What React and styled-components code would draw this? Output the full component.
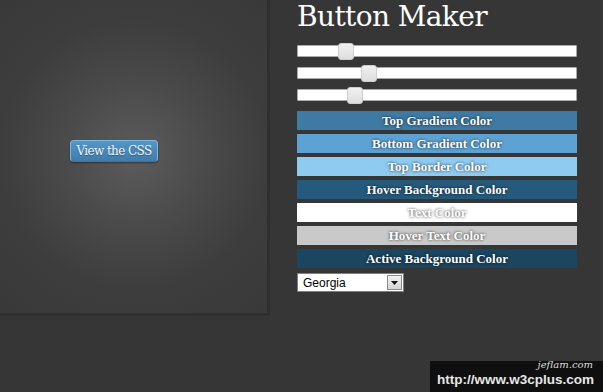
import React from "react";
import styled, { createGlobalStyle } from "styled-components";

const GlobalStyle = createGlobalStyle`
  html, body {
    margin: 0;
    padding: 0;
    background: #363636;
    height: 100%;
  }
  #root {
    height: 100%;
  }
`;

const colorRows = [
  { label: "Top Gradient Color", bg: "#3f7aa4", fg: "#ffffff" },
  { label: "Bottom Gradient Color", bg: "#5ea2d3", fg: "#ffffff" },
  { label: "Top Border Color", bg: "#8fcaf1", fg: "#ffffff" },
  { label: "Hover Background Color", bg: "#265a7c", fg: "#ffffff" },
  { label: "Text Color", bg: "#ffffff", fg: "#ffffff" },
  { label: "Hover Text Color", bg: "#c9c9c9", fg: "#ffffff" },
  { label: "Active Background Color", bg: "#1b4561", fg: "#ffffff" },
];

// thumb offsets along each track, in px
const sliders = [40, 63, 49];

const Page = styled.div`
  position: relative;
  display: flex;
  align-items: flex-start;
  gap: 27px;
  width: 603px;
  height: 392px;
  overflow: hidden;
  font-family: "DejaVu Serif", "Liberation Serif", serif;
`;

const Preview = styled.div`
  width: 267px;
  height: 313px;
  flex-shrink: 0;
  display: flex;
  align-items: center;
  justify-content: center;
  background: radial-gradient(
    circle at 135px 155px,
    #5c5c5c 0%,
    #4a4a4a 35%,
    #3d3d3d 65%,
    #393939 100%
  );
  border-right: 3px solid #2f2f2f;
  border-bottom: 3px solid #303030;
  box-sizing: content-box;
`;

const CssButton = styled.button`
  margin: 0 39px 12px 0;
  height: 22px;
  padding: 0 5px;
  border: 1px solid #7fb9e2;
  border-bottom-color: #3c75a2;
  border-radius: 4px;
  background: linear-gradient(#5595c8, #3f7cab);
  color: #f4f8fb;
  font-family: "DejaVu Serif", serif;
  font-size: 12px;
  letter-spacing: -0.6px;
  text-shadow: 0 1px 1px rgba(0, 0, 0, 0.35);
  box-shadow: 0 1px 2px rgba(0, 0, 0, 0.4);
`;

const Controls = styled.div`
  width: 280px;
  display: flex;
  flex-direction: column;
`;

const Title = styled.h1`
  margin: 0 0 9px;
  color: #ffffff;
  font-family: "DejaVu Serif", serif;
  font-weight: normal;
  font-size: 28px;
  letter-spacing: -0.6px;
  line-height: 33px;
  height: 33px;
`;

const SliderList = styled.div`
  display: flex;
  flex-direction: column;
  gap: 10px;
  margin-top: 3px;
  margin-bottom: 10px;
`;

const Track = styled.div`
  position: relative;
  height: 10px;
  background: #ffffff;
  border: 1px solid #a9a9a9;
  border-radius: 1px;
`;

const Thumb = styled.div`
  position: absolute;
  top: -3px;
  width: 14px;
  height: 15px;
  border: 1px solid #cfcfcf;
  border-radius: 3px;
  background: linear-gradient(#f0f0f0, #dedede);
`;

const ColorList = styled.div`
  display: flex;
  flex-direction: column;
  gap: 4px;
`;

const ColorRow = styled.div`
  height: 19px;
  line-height: 19px;
  background: ${(p) => p.$bg};
  color: ${(p) => p.$fg};
  text-align: center;
  font-family: "Liberation Serif", serif;
  font-size: 13px;
  font-weight: bold;
  text-shadow: 0 0 3px rgba(0, 0, 0, 0.85);
`;

const SelectBox = styled.div`
  margin-top: 5px;
  width: 105px;
  height: 17px;
  display: flex;
  align-items: center;
  justify-content: space-between;
  background: #ffffff;
  border: 1px solid #7f7f7f;
  box-sizing: content-box;
`;

const SelectText = styled.span`
  padding-left: 5px;
  font-family: "Liberation Sans", Arial, sans-serif;
  font-size: 12px;
  color: #000;
`;

const SelectArrow = styled.div`
  width: 15px;
  height: 15px;
  margin-right: 1px;
  display: flex;
  align-items: center;
  justify-content: center;
  background: linear-gradient(#f2f2f2, #d4d4d4);
  border: 1px solid #8a8a8a;
  box-sizing: border-box;
`;

const Watermark = styled.div`
  position: absolute;
  right: 0;
  bottom: 0;
  width: 173px;
  height: 31px;
  background: #0f0f0f;
`;

const WatermarkUrl = styled.div`
  position: absolute;
  left: 7px;
  bottom: 5px;
  color: #e8e8e8;
  font-family: "Liberation Sans", Arial, sans-serif;
  font-weight: bold;
  font-size: 13.5px;
`;

const WatermarkSig = styled.div`
  position: absolute;
  right: 10px;
  top: -2px;
  color: #dcdcdc;
  font-family: "DejaVu Serif", serif;
  font-style: italic;
  font-size: 10px;
`;

const App = () => (
  <>
    <GlobalStyle />
    <Page>
      <Preview>
        <CssButton>View the CSS</CssButton>
      </Preview>
      <Controls>
        <Title>Button Maker</Title>
        <SliderList>
          {sliders.map((x, i) => (
            <Track key={i}>
              <Thumb style={{ left: `${x}px` }} />
            </Track>
          ))}
        </SliderList>
        <ColorList>
          {colorRows.map((row) => (
            <ColorRow key={row.label} $bg={row.bg} $fg={row.fg}>
              {row.label}
            </ColorRow>
          ))}
        </ColorList>
        <SelectBox>
          <SelectText>Georgia</SelectText>
          <SelectArrow>
            <svg width="7" height="4" viewBox="0 0 7 4">
              <path d="M0 0h7L3.5 4z" fill="#111" />
            </svg>
          </SelectArrow>
        </SelectBox>
      </Controls>
      <Watermark>
        <WatermarkSig>jeflam.com</WatermarkSig>
        <WatermarkUrl>http://www.w3cplus.com</WatermarkUrl>
      </Watermark>
    </Page>
  </>
);

export default App;
